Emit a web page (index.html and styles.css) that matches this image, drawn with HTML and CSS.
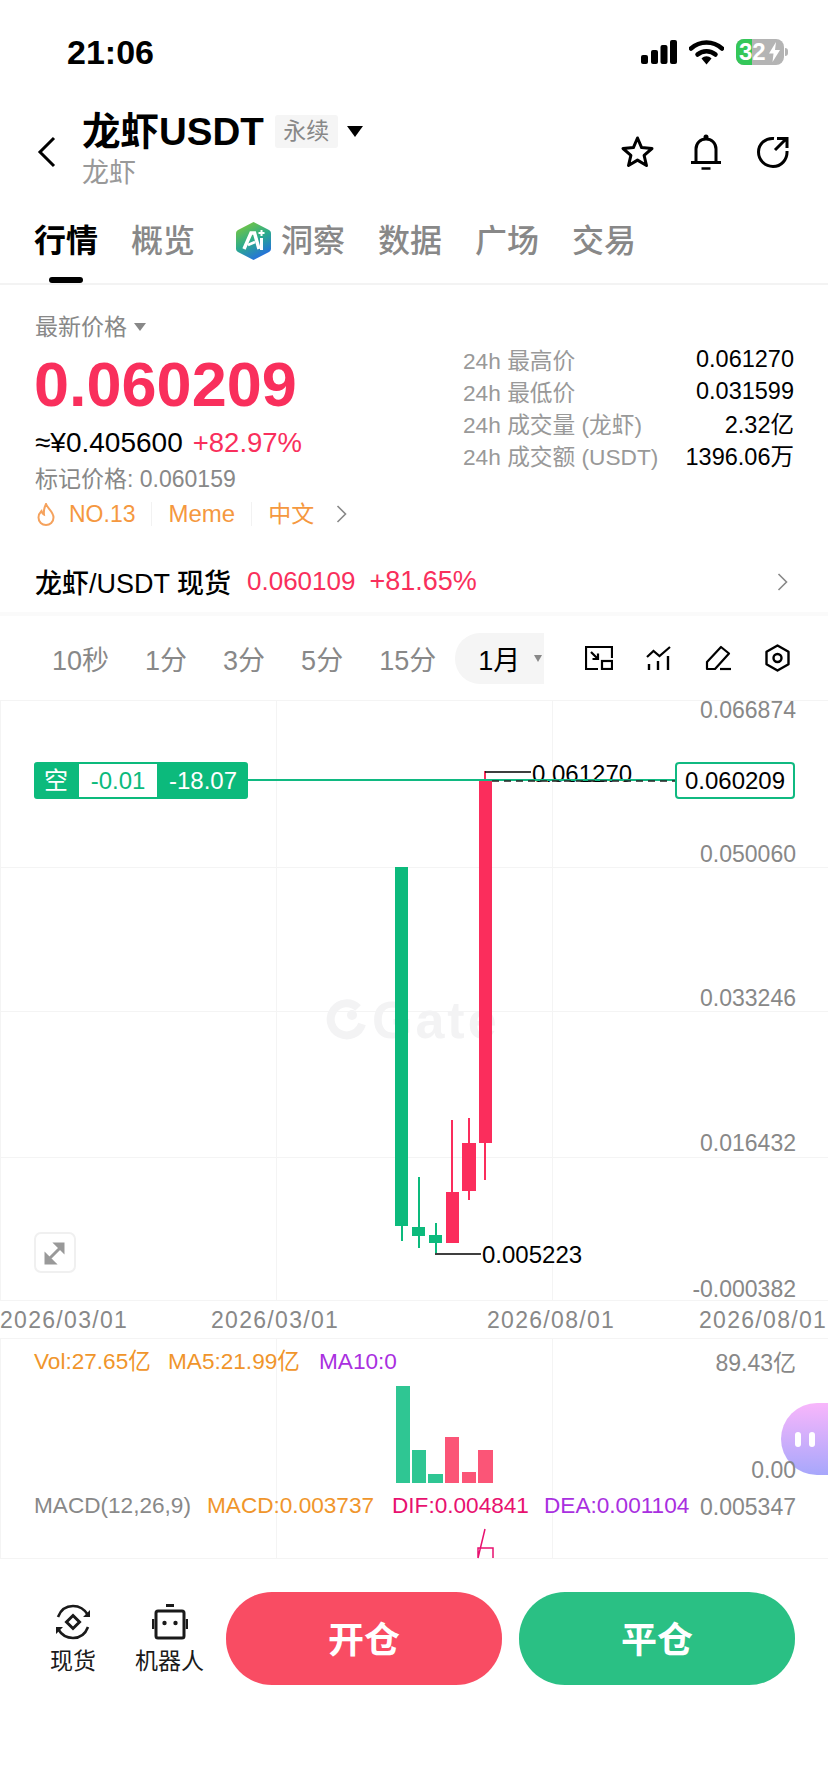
FILE: index.html
```html
<!DOCTYPE html>
<html>
<head>
    <title>龙虾USDT</title>
    <link rel="stylesheet" href="styles.css">
</head>
<body>
    <div class="page">
        <div class="status">
            <span class="time">21:06</span>
            <div class="status-icons">
                <svg class="ic-signal" width="36" height="24" viewBox="0 0 36 24">
                    <rect x="0" y="15" width="7" height="9" rx="2"/>
                    <rect x="10" y="10" width="7" height="14" rx="2"/>
                    <rect x="19.500" y="5" width="7" height="19" rx="2"/>
                    <rect x="29" y="0" width="7" height="24" rx="2"/>
                </svg>
                <svg class="ic-wifi" width="35" height="25" viewBox="0 0 35 25">
                    <path d="M2 8.500C11 0.500 24 0.500 33 8.500" fill="none" stroke="#000" stroke-width="4.500" stroke-linecap="round"/>
                    <path d="M8.500 14.500C13.500 10 21.500 10 26.500 14.500" fill="none" stroke="#000" stroke-width="4.500" stroke-linecap="round"/>
                    <path d="M12.500 18.500C15.500 15.500 19.500 15.500 22.500 18.500L17.500 24.500Z"/>
                </svg>
                <div class="battery">
                    <div class="battery-fill"></div>
                    <span class="battery-num">32</span>
                    <svg class="battery-bolt" width="11" height="20" viewBox="0 0 11 20"><path d="M7 0L0 11.500H4.500L3.500 20L11 8H6Z" fill="#fff"/></svg>
                    <span class="battery-nub"></span>
                </div>
            </div>
        </div>

        <div class="header">
            <svg class="back" width="19" height="32" viewBox="0 0 19 32"><path d="M17 2L3 16L17 30" fill="none" stroke="#000" stroke-width="3"/></svg>
            <div class="title-wrap">
                <div class="title-row">
                    <span class="title">龙虾USDT</span>
                    <span class="badge">永续</span>
                    <span class="caret-title"></span>
                </div>
                <div class="subtitle">龙虾</div>
            </div>
            <div class="header-icons">
                <svg width="35" height="34" viewBox="0 0 35 34"><path d="M17.500 3L21.600 12.600L32 13.500L24.100 20.300L26.500 30.500L17.500 25.100L8.500 30.500L10.900 20.300L3 13.500L13.400 12.600Z" fill="none" stroke="#000" stroke-width="3" stroke-linejoin="round"/></svg>
                <svg width="30" height="36" viewBox="0 0 30 36">
                    <path d="M5 28V15C5 9 9.500 5 15 5C20.500 5 25 9 25 15V28" fill="none" stroke="#000" stroke-width="3"/>
                    <path d="M0 28.500H30" stroke="#000" stroke-width="3"/>
                    <path d="M10.500 34.500H19.500" stroke="#000" stroke-width="2.500"/>
                    <circle cx="15" cy="3" r="2.500"/>
                </svg>
                <svg width="32" height="32" viewBox="0 0 32 32">
                    <path d="M17 2.500C8.500 1.500 1.500 8 1.500 16C1.500 24 8 30.500 16 30.500C24 30.500 30.500 24 30 15" fill="none" stroke="#000" stroke-width="3"/>
                    <path d="M18 14L29 3M20 2.500H30V12" fill="none" stroke="#000" stroke-width="3"/>
                </svg>
            </div>
        </div>

        <div class="tabs">
            <span class="tab tab-active">行情</span>
            <span class="tab">概览</span>
            <span class="tab tab-ai">
                <svg width="35" height="38" viewBox="0 0 35 38">
                    <defs>
                        <linearGradient id="aiGrad" x1="0.200" y1="0" x2="0.700" y2="1">
                            <stop offset="0" stop-color="#7ac83c"/>
                            <stop offset="0.500" stop-color="#2cab8c"/>
                            <stop offset="1" stop-color="#2469e6"/>
                        </linearGradient>
                    </defs>
                    <path d="M17.500 0L33 8C34.500 9 35 10 35 11.500V26.500C35 28 34.500 29 33 30L17.500 38L2 30C0.500 29 0 28 0 26.500V11.500C0 10 0.500 9 2 8Z" fill="url(#aiGrad)"/>
                    <path d="M8 27L15 11H18.500L23 27" fill="none" stroke="#fff" stroke-width="3.500"/>
                    <path d="M12 23L19 20" stroke="#fff" stroke-width="2.500"/>
                    <path d="M25.500 16V28" stroke="#fff" stroke-width="3"/>
                    <path d="M25.500 8V14M22.500 11H28.500" stroke="#fff" stroke-width="2"/>
                </svg>
                洞察
            </span>
            <span class="tab">数据</span>
            <span class="tab">广场</span>
            <span class="tab">交易</span>
        </div>

        <div class="quote">
            <div class="quote-left">
                <div class="latest">最新价格<span class="caret-small"></span></div>
                <div class="price">0.060209</div>
                <div class="fiat-row">≈¥0.405600<span class="change">+82.97%</span></div>
                <div class="mark">标记价格: 0.060159</div>
                <div class="tags">
                    <svg class="flame" width="18" height="23" viewBox="0 0 18 23"><path d="M9 1C10 5 16.500 8.500 16.500 14.500C16.500 19 13 22 9 22C5 22 1.500 19 1.500 14.500C1.500 11.500 3 9.500 4.500 8C5 10 6 11 7 11.500C6.500 7.500 7.500 4 9 1Z" fill="none" stroke="#f5a25d" stroke-width="2"/></svg>
                    <span class="tag tag-first">NO.13</span>
                    <span class="tag">Meme</span>
                    <span class="tag tag-cn">中文</span>
                    <svg class="tag-more" width="11" height="18" viewBox="0 0 11 18"><path d="M1.500 1L9.500 9L1.500 17" fill="none" stroke="#888" stroke-width="1.600"/></svg>
                </div>
            </div>
            <div class="stats">
                <div class="stat"><span>24h 最高价</span><b>0.061270</b></div>
                <div class="stat"><span>24h 最低价</span><b>0.031599</b></div>
                <div class="stat"><span>24h 成交量 (龙虾)</span><b>2.32亿</b></div>
                <div class="stat"><span>24h 成交额 (USDT)</span><b>1396.06万</b></div>
            </div>
        </div>

        <div class="spot">
            <span class="spot-name">龙虾/USDT 现货</span>
            <span class="spot-price">0.060109</span>
            <span class="spot-price spot-change">+81.65%</span>
            <svg class="spot-more" width="11" height="18" viewBox="0 0 11 18"><path d="M1.500 1L9.500 9L1.500 17" fill="none" stroke="#888" stroke-width="1.600"/></svg>
        </div>

        <div class="intervals">
            <span class="iv">10秒</span>
            <span class="iv">1分</span>
            <span class="iv">3分</span>
            <span class="iv">5分</span>
            <span class="iv">15分</span>
            <span class="iv-pill">1月<span class="caret-iv"></span></span>
            <div class="iv-icons">
                <svg width="28" height="24" viewBox="0 0 28 24">
                    <path d="M13 23H1V1H27V12" fill="none" stroke="#000" stroke-width="2.200"/>
                    <rect x="17" y="15" width="10" height="8" fill="none" stroke="#000" stroke-width="2.200"/>
                    <path d="M6 6L13 13M13 7.500V13H7.500" fill="none" stroke="#000" stroke-width="2.200"/>
                </svg>
                <svg width="26" height="25" viewBox="0 0 26 25">
                    <path d="M1 11L7.500 5L13.500 10L24 1" fill="none" stroke="#000" stroke-width="2.200"/>
                    <path d="M3 18V24M12 15V24M22 10V24" stroke="#000" stroke-width="2.400"/>
                </svg>
                <svg width="27" height="26" viewBox="0 0 27 26">
                    <path d="M2 24V17L16 2L24 8.500L10 24Z" fill="none" stroke="#000" stroke-width="2.200" stroke-linejoin="round"/>
                    <path d="M15 24H26" stroke="#000" stroke-width="2.200"/>
                </svg>
                <svg width="25" height="28" viewBox="0 0 25 28">
                    <path d="M12.500 1.500L23.500 7.800V20.200L12.500 26.500L1.500 20.200V7.800Z" fill="none" stroke="#000" stroke-width="2.400" stroke-linejoin="round"/>
                    <circle cx="12.500" cy="14" r="4" fill="none" stroke="#000" stroke-width="2.400"/>
                </svg>
            </div>
        </div>

        <div class="chart">
            <div class="bubble">
                <span class="bubble-eye"></span>
                <span class="bubble-eye"></span>
            </div>
            <svg class="chart-svg" width="828" height="858" viewBox="0 700 828 858">
                <!-- grid -->
                <path class="grid" d="M0 700.500H828M0 867.500H828M0 1011.500H828M0 1157.500H828M0 1300.500H828M0 1338.500H828M0 1558.500H828M0.500 700V1300M276.500 700V1300M552.500 700V1300M0.500 1338V1558M276.500 1338V1558M552.500 1338V1558"/>

                <!-- watermark -->
                <path class="wm-ring" d="M358 1008A16 16 0 1 0 362 1024"/>
                <circle class="wm-dot" cx="352" cy="1015" r="5"/>
                <text class="wm-text" x="372" y="1038">Gate</text>

                <!-- candles -->
                <g class="up">
                    <rect x="401" y="867" width="2" height="374"/>
                    <rect x="395" y="867" width="13" height="359"/>
                    <rect x="418" y="1177" width="2" height="71"/>
                    <rect x="412" y="1227" width="13" height="9"/>
                    <rect x="435" y="1223" width="2" height="30"/>
                    <rect x="429" y="1235" width="13" height="8"/>
                </g>
                <g class="down">
                    <rect x="451" y="1120" width="2" height="123"/>
                    <rect x="446" y="1192" width="13" height="51"/>
                    <rect x="468" y="1118" width="2" height="82"/>
                    <rect x="462" y="1143" width="14" height="48"/>
                    <rect x="484" y="771" width="2" height="409"/>
                    <rect x="479" y="781" width="13" height="362"/>
                </g>

                <!-- high / low marks -->
                <path class="mark-line" d="M485 772H531M435 1254H481"/>
                <text class="mark-text" x="532" y="782">0.061270</text>
                <text class="mark-text" x="482" y="1263">0.005223</text>

                <!-- current price line -->
                <path class="price-line" d="M248 780H676"/>
                <path class="price-dash" d="M492 781H676"/>
                <rect class="price-box" x="676" y="763" width="118" height="35" rx="3"/>
                <text class="price-box-text" x="735" y="789">0.060209</text>

                <!-- position tag -->
                <rect class="pos-bg" x="34" y="762" width="214" height="37" rx="3"/>
                <rect class="pos-mid" x="79" y="764" width="78" height="33"/>
                <text class="pos-text" x="56" y="789">空</text>
                <text class="pos-num pos-num-mid" x="118" y="789">-0.01</text>
                <text class="pos-text" x="203" y="789">-18.07</text>

                <!-- price axis -->
                <text class="axis" x="796" y="718">0.066874</text>
                <text class="axis" x="796" y="862">0.050060</text>
                <text class="axis" x="796" y="1006">0.033246</text>
                <text class="axis" x="796" y="1151">0.016432</text>
                <text class="axis" x="796" y="1297">-0.000382</text>

                <!-- dates -->
                <text class="date" x="0" y="1328">2026/03/01</text>
                <text class="date" x="211" y="1328">2026/03/01</text>
                <text class="date" x="487" y="1328">2026/08/01</text>
                <text class="date" x="699" y="1328">2026/08/01</text>

                <!-- expand button -->
                <rect class="expand-box" x="35" y="1233" width="40" height="39" rx="6"/>
                <path class="expand-arrow" d="M46 1262L63 1245M63 1251V1244H56L63 1251ZM46 1255V1263H54Z"/>

                <!-- volume -->
                <text class="leg orange" x="34" y="1369">Vol:27.65亿</text>
                <text class="leg orange" x="168" y="1369">MA5:21.99亿</text>
                <text class="leg purple" x="319" y="1369">MA10:0</text>
                <text class="axis" x="796" y="1371">89.43亿</text>
                <g class="vol-up">
                    <rect x="396" y="1386" width="14" height="97"/>
                    <rect x="412" y="1450" width="14" height="33"/>
                    <rect x="428" y="1474" width="15" height="9"/>
                </g>
                <g class="vol-down">
                    <rect x="445" y="1437" width="14" height="46"/>
                    <rect x="462" y="1472" width="14" height="11"/>
                    <rect x="478" y="1450" width="15" height="33"/>
                </g>
                <text class="axis" x="796" y="1478">0.00</text>

                <!-- macd -->
                <text class="leg gray" x="34" y="1513">MACD(12,26,9)</text>
                <text class="leg orange" x="207" y="1513">MACD:0.003737</text>
                <text class="leg pink" x="392" y="1513">DIF:0.004841</text>
                <text class="leg purple" x="544" y="1513">DEA:0.001104</text>
                <text class="axis" x="796" y="1515">0.005347</text>
                <path class="macd-line" d="M478 1558L485 1529M478 1558V1548H493V1558"/>
            </svg>
        </div>

        <div class="actions">
            <div class="tool">
                <svg width="36" height="36" viewBox="0 0 36 36">
                    <path d="M3 13C6 5 12 2 18 2C25 2 30 6 33 11M33 23C30 31 24 34 18 34C11 34 6 30 3 25" fill="none" stroke="#1a1a1a" stroke-width="2.600"/>
                    <path d="M28 13H35V6ZM8 23H1V30Z" fill="#1a1a1a"/>
                    <path d="M18 11.500L24.500 18L18 24.500L11.500 18Z" fill="none" stroke="#1a1a1a" stroke-width="3"/>
                </svg>
                <span>现货</span>
            </div>
            <div class="tool">
                <svg width="36" height="36" viewBox="0 0 36 36">
                    <path d="M14 1.500H22" stroke="#1a1a1a" stroke-width="3"/>
                    <rect x="4" y="7" width="28" height="27" rx="2" fill="none" stroke="#1a1a1a" stroke-width="3"/>
                    <path d="M1 15V25M35 15V25" stroke="#1a1a1a" stroke-width="2.500"/>
                    <circle cx="12.500" cy="19" r="2.200" fill="#1a1a1a"/>
                    <circle cx="23.500" cy="19" r="2.200" fill="#1a1a1a"/>
                </svg>
                <span>机器人</span>
            </div>
            <button class="btn btn-open">开仓</button>
            <button class="btn btn-close">平仓</button>
        </div>
    </div>
</body>
</html>
```

FILE: styles.css
```css
* {
    box-sizing: border-box;
}
body {
    margin: 0;
    background: #fff;
    font-family: "Liberation Sans", "Noto Sans CJK SC", sans-serif;
    color: #000;
}
.page {
    width: 828px;
    height: 1792px;
    overflow: hidden;
}

/* status bar */
.status {
    height: 104px;
    display: flex;
    align-items: center;
    justify-content: space-between;
    padding: 0 40px 0 67px;
}
.time {
    font-size: 34px;
    font-weight: 700;
}
.status-icons {
    display: flex;
    align-items: center;
    gap: 12px;
}
.battery {
    position: relative;
    width: 48px;
    height: 26px;
    border-radius: 8px;
    background: #b4b4b4;
    color: #fff;
    font-size: 24px;
    font-weight: 700;
    line-height: 26px;
    margin-right: 4px;
}
.battery-fill {
    position: absolute;
    left: 0;
    top: 0;
    width: 16px;
    height: 26px;
    border-radius: 8px 0 0 8px;
    background: #34c759;
}
.battery-num {
    position: absolute;
    left: 3px;
    top: 0;
}
.battery-bolt {
    position: absolute;
    left: 33px;
    top: 3px;
}
.battery-nub {
    position: absolute;
    left: 49px;
    top: 9px;
    width: 3px;
    height: 8px;
    border-radius: 0 3px 3px 0;
    background: #b4b4b4;
}

/* header */
.header {
    height: 96px;
    display: flex;
    align-items: center;
    padding: 0 39px 0 37px;
}
.back {
    margin-right: 26px;
}
.title-wrap {
    flex: 1;
    margin-bottom: 5px;
}
.title-row {
    display: flex;
    align-items: center;
    height: 46px;
}
.title {
    font-size: 38.500px;
    font-weight: 700;
    line-height: 46px;
}
.badge {
    margin-left: 11px;
    width: 63px;
    height: 33px;
    line-height: 33px;
    text-align: center;
    background: #f5f5f5;
    border-radius: 3px;
    color: #888;
    font-size: 23px;
}
.caret-title {
    margin-left: 9px;
    border-left: 8px solid transparent;
    border-right: 8px solid transparent;
    border-top: 11px solid #000;
}
.subtitle {
    color: #999;
    font-size: 27px;
    line-height: 36px;
}
.header-icons {
    display: flex;
    align-items: center;
    gap: 36px;
}

/* tabs */
.tabs {
    position: relative;
    height: 85px;
    display: flex;
    gap: 33px;
    padding: 21px 0 0 34px;
    border-bottom: 2px solid #f3f3f3;
}
.tab {
    font-size: 32px;
    line-height: 40px;
    height: 40px;
    color: #888;
    font-weight: 500;
}
.tab-active {
    color: #000;
    font-weight: 700;
}
.tab-active::after {
    content: "";
    position: absolute;
    left: 49px;
    top: 77px;
    width: 34px;
    height: 6px;
    border-radius: 3px;
    background: #000;
}
.tab-ai {
    display: flex;
    align-items: center;
    gap: 10px;
    margin-left: 8px;
}

/* price block */
.quote {
    height: 270px;
    display: flex;
    justify-content: space-between;
    padding: 27px 34px 0 35px;
}
.latest {
    display: flex;
    align-items: center;
    color: #888;
    font-size: 23px;
    line-height: 30px;
}
.caret-small {
    margin-left: 7px;
    border-left: 6px solid transparent;
    border-right: 6px solid transparent;
    border-top: 8px solid #888;
}
.price {
    margin: 11px 0 0 -1px;
    color: #f92f5c;
    font-size: 63px;
    font-weight: 700;
    line-height: 62px;
}
.fiat-row {
    margin-top: 11px;
    font-size: 28px;
    line-height: 34px;
}
.change {
    margin-left: 10px;
    color: #f92f5c;
    font-size: 27.500px;
}
.mark {
    margin-top: 4px;
    color: #888;
    font-size: 23px;
    line-height: 30px;
}
.tags {
    margin-top: 4px;
    display: flex;
    align-items: center;
    height: 32px;
    color: #f5983f;
    font-size: 23px;
}
.flame {
    margin: 0 14px 0 2px;
}
.tag {
    padding: 0 16px;
    border-left: 1px solid #f2f2f2;
    line-height: 24px;
    font-size: 24px;
}
.tag-first {
    padding-left: 0;
    padding-right: 16px;
    border-left: none;
    font-size: 23px;
}
.tag-cn {
    padding: 0 22px 0 16px;
    font-size: 23px;
}
.stats {
    width: 331px;
    padding-top: 31px;
}
.stat {
    display: flex;
    justify-content: space-between;
    align-items: center;
    height: 32px;
    color: #999;
    font-size: 22.700px;
}
.stat b {
    color: #000;
    font-weight: 400;
    font-size: 23.500px;
}

/* spot row */
.spot {
    height: 61px;
    display: flex;
    align-items: center;
    gap: 12px;
    padding: 0 40px 4px 35px;
    border-bottom: 4px solid #fafafa;
    font-size: 26px;
}
.spot-name {
    font-size: 27px;
    font-weight: 500;
    margin-right: 4px;
}
.spot-price {
    color: #f92f5c;
}
.spot-change {
    margin-left: 2px;
    font-size: 27px;
}
.spot-more {
    margin-left: auto;
}

/* interval bar */
.intervals {
    height: 84px;
    display: flex;
    align-items: center;
    gap: 36px;
    padding: 0 38px 0 52px;
    font-size: 27px;
    color: #888;
}
.iv-pill {
    display: flex;
    align-items: center;
    width: 89px;
    height: 51px;
    margin-left: -17px;
    padding-left: 23px;
    border-radius: 25px 0 0 25px;
    background: #f5f5f5;
    color: #000;
}
.caret-iv {
    margin-left: 14px;
    border-left: 4px solid transparent;
    border-right: 4px solid transparent;
    border-top: 7px solid #888;
}
.iv-icons {
    margin-left: auto;
    display: flex;
    align-items: center;
    gap: 33px;
}

/* chart canvas */
.chart {
    position: relative;
    height: 858px;
}
.chart-svg {
    position: relative;
    display: block;
    overflow: visible;
}
.grid {
    fill: none;
    stroke: #f4f4f4;
    stroke-width: 1;
}
.wm-ring {
    fill: none;
    stroke: #f3f3f4;
    stroke-width: 8;
}
.wm-dot {
    fill: #f3f3f4;
}
.wm-text {
    fill: #f3f3f4;
    font-size: 52px;
    font-weight: 700;
    letter-spacing: 3px;
}
.up {
    fill: #0cba7c;
}
.down {
    fill: #fb2d5c;
}
.mark-line {
    fill: none;
    stroke: #000;
    stroke-width: 1.500;
}
.mark-text {
    font-size: 24px;
    fill: #000;
}
.price-line {
    stroke: #10b981;
    stroke-width: 2;
}
.price-dash {
    stroke: #222;
    stroke-width: 1.500;
    stroke-dasharray: 7 5;
}
.price-box {
    fill: #fff;
    stroke: #10b981;
    stroke-width: 2;
}
.price-box-text {
    font-size: 24px;
    text-anchor: middle;
}
.pos-bg {
    fill: #0cba7c;
}
.pos-mid {
    fill: #fff;
}
.pos-text {
    fill: #fff;
    font-size: 24px;
    text-anchor: middle;
}
.pos-num {
    font-size: 24px;
    text-anchor: middle;
}
.pos-num-mid {
    fill: #0cba7c;
}
.axis {
    fill: #888;
    font-size: 23px;
    text-anchor: end;
}
.date {
    fill: #888;
    font-size: 23px;
    letter-spacing: 1.300px;
}
.expand-box {
    fill: #fff;
    stroke: #f0f0f0;
    stroke-width: 2;
}
.expand-arrow {
    fill: #999;
    stroke: #999;
    stroke-width: 3;
}
.leg {
    font-size: 22.600px;
}
.orange {
    fill: #f0952b;
}
.purple {
    fill: #a92fe0;
}
.pink {
    fill: #e8116f;
}
.gray {
    fill: #888;
}
.vol-up {
    fill: #2fc693;
}
.vol-down {
    fill: #fb5577;
}
.macd-line {
    fill: none;
    stroke: #e8116f;
    stroke-width: 1.500;
}
.bubble {
    position: absolute;
    right: 0;
    top: 703px;
    width: 47px;
    height: 72px;
    display: flex;
    align-items: center;
    justify-content: center;
    gap: 8px;
    border-radius: 36px 0 0 36px;
    background: linear-gradient(to bottom, #f8b6fb, #a7a7fb);
}
.bubble-eye {
    width: 6px;
    height: 15px;
    border-radius: 3px;
    background: #fff;
}

/* bottom actions */
.actions {
    height: 234px;
    display: flex;
    align-items: flex-start;
    padding: 34px 33px 0 50px;
}
.tool {
    display: flex;
    flex-direction: column;
    align-items: center;
    margin: 12px 39px 0 0;
    color: #1a1a1a;
    font-size: 23px;
    line-height: 30px;
}
.tool span {
    margin-top: 6px;
}
.tool:nth-child(2) {
    margin-right: 22px;
}
.btn {
    width: 276px;
    height: 93px;
    padding: 0 0 3px;
    border: none;
    border-radius: 46px;
    color: #fff;
    font-family: inherit;
    font-size: 36px;
    font-weight: 700;
}
.btn-open {
    background: #f94c63;
}
.btn-close {
    margin-left: 17px;
    background: #2ac084;
}
```
